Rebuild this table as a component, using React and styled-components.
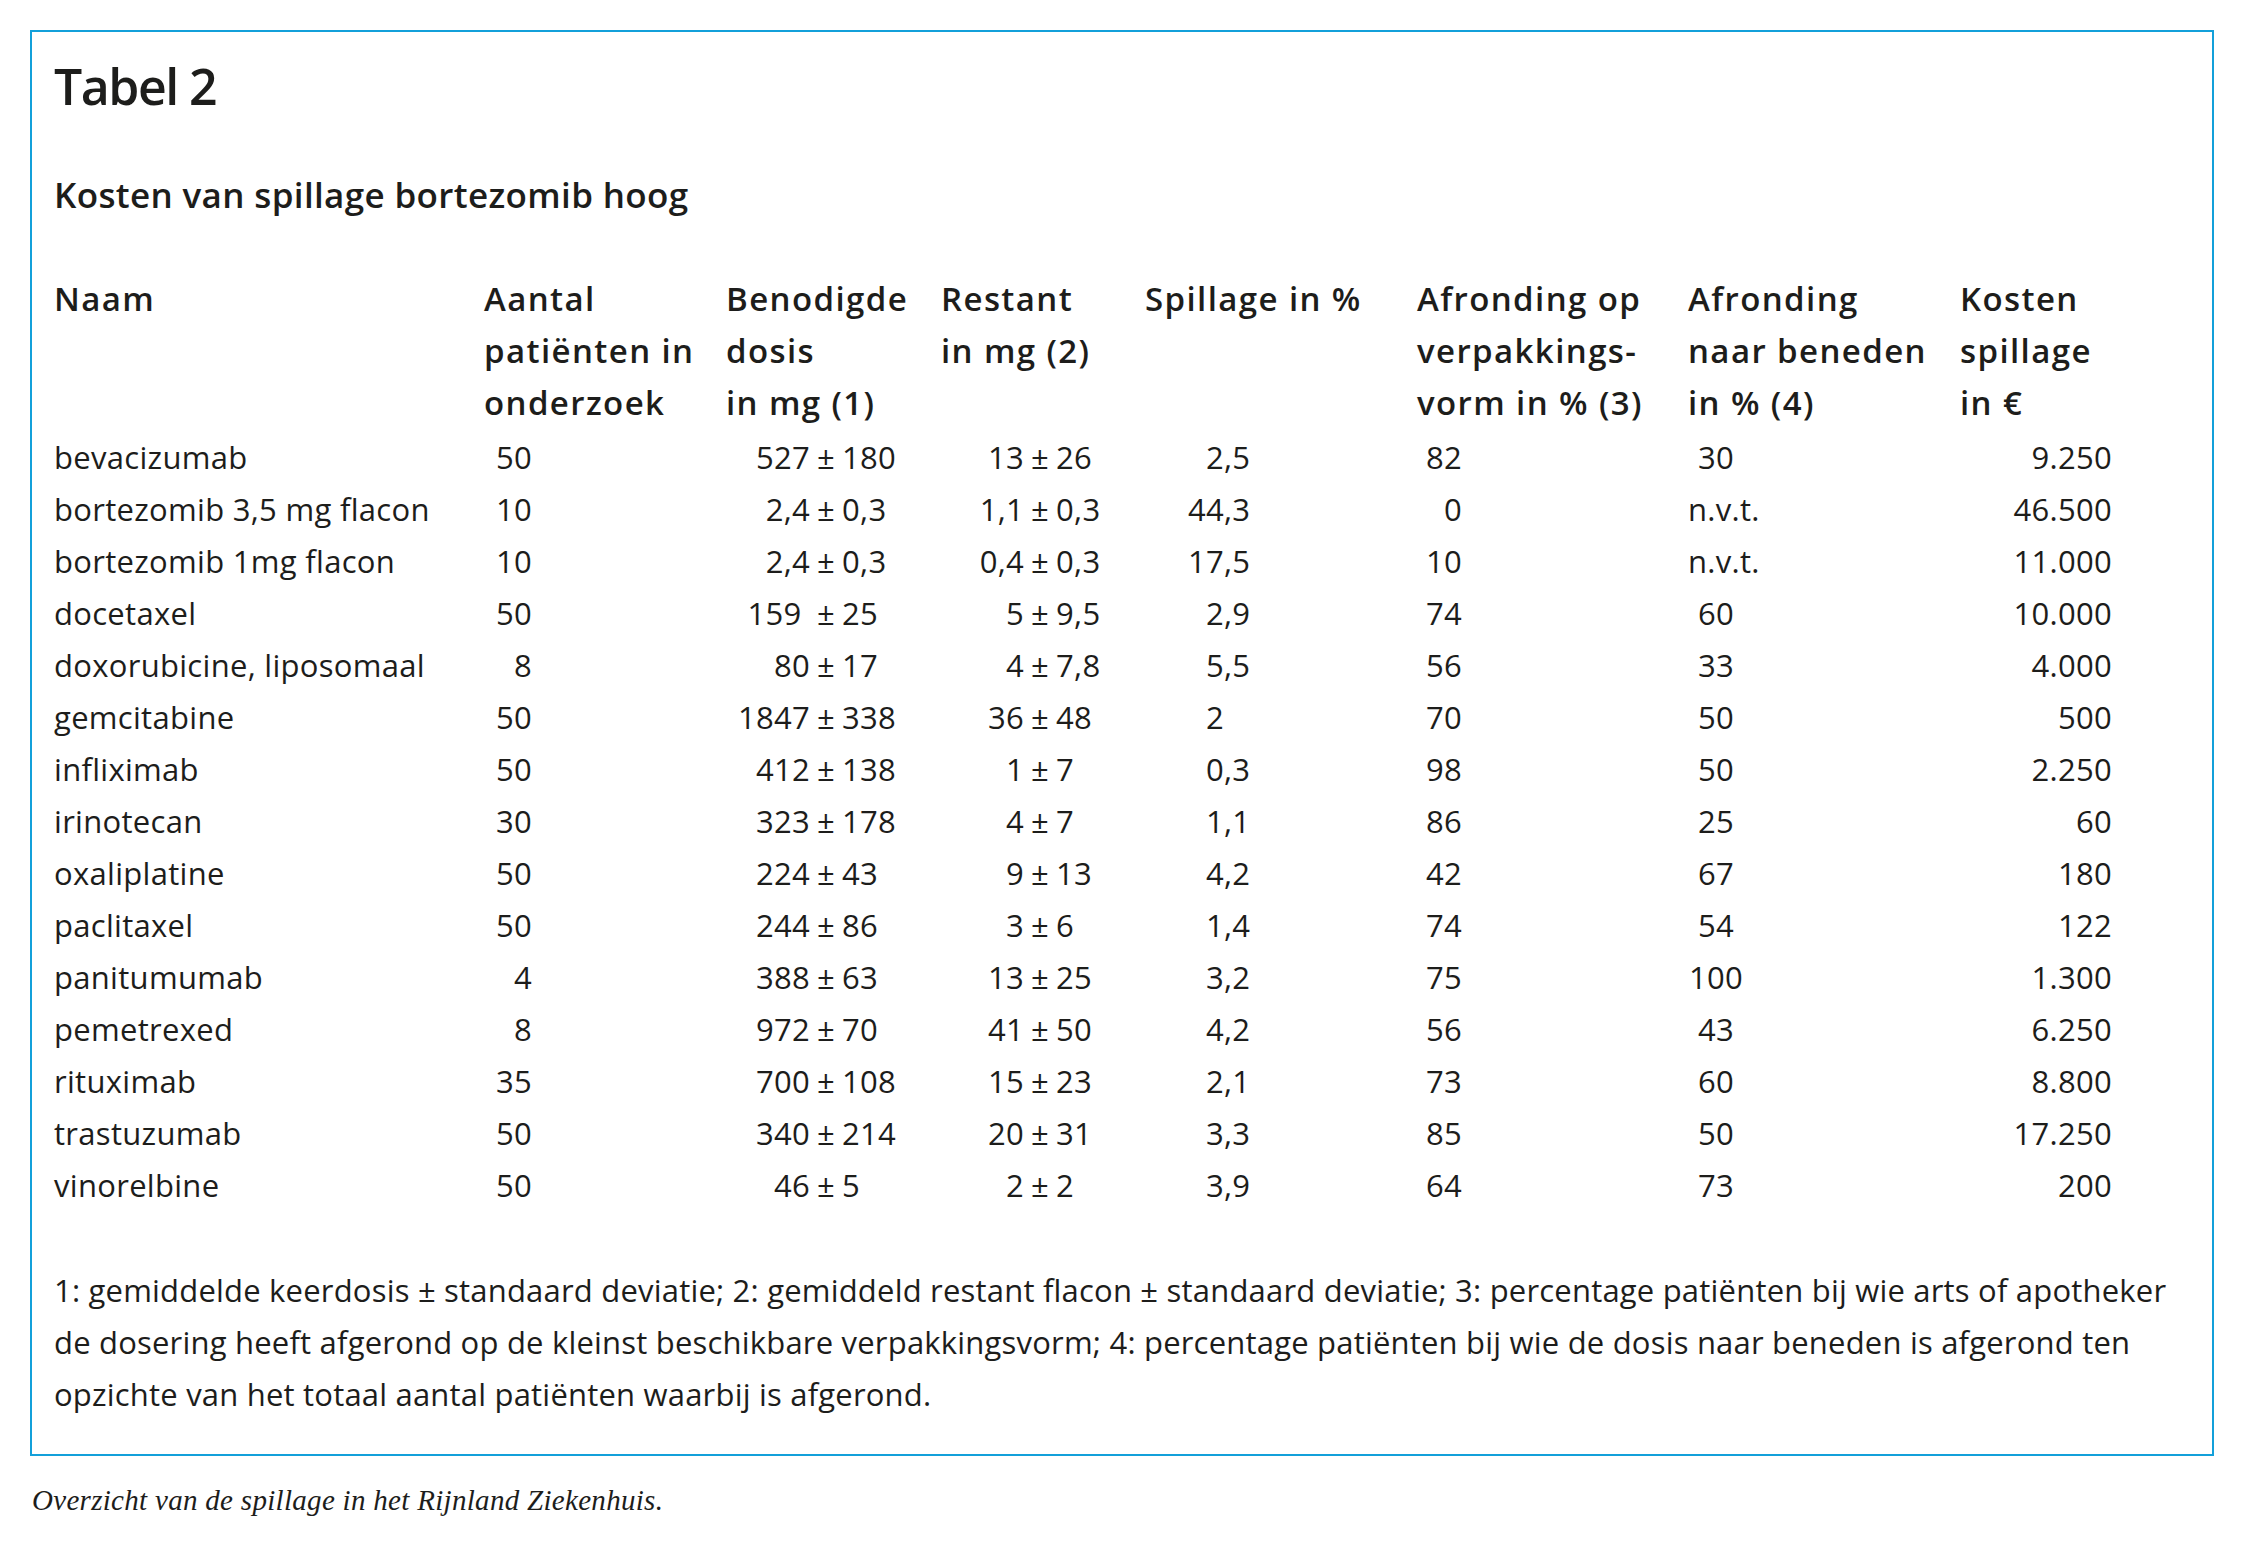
import React from 'react';
import styled, { createGlobalStyle } from 'styled-components';

const GlobalStyle = createGlobalStyle`
  html, body {
    margin: 0;
    padding: 0;
    background: #FFFFFF;
  }
  body {
    font-family: 'Open Sans', 'Noto Sans', sans-serif;
    color: #1D1D1B;
  }
`;

const COLUMNS = '430px 242px 215px 204px 272px 271px 272px 152px';

const rows = [
  ['bevacizumab', '50', ['527', '180'], ['13', '26'], '2,5', '82', '30', '9.250'],
  ['bortezomib 3,5 mg flacon', '10', ['2,4', '0,3'], ['1,1', '0,3'], '44,3', '0', 'n.v.t.', '46.500'],
  ['bortezomib 1mg flacon', '10', ['2,4', '0,3'], ['0,4', '0,3'], '17,5', '10', 'n.v.t.', '11.000'],
  ['docetaxel', '50', ['159 ', '25'], ['5', '9,5'], '2,9', '74', '60', '10.000'],
  ['doxorubicine, liposomaal', '8', ['80', '17'], ['4', '7,8'], '5,5', '56', '33', '4.000'],
  ['gemcitabine', '50', ['1847', '338'], ['36', '48'], '2', '70', '50', '500'],
  ['infliximab', '50', ['412', '138'], ['1', '7'], '0,3', '98', '50', '2.250'],
  ['irinotecan', '30', ['323', '178'], ['4', '7'], '1,1', '86', '25', '60'],
  ['oxaliplatine', '50', ['224', '43'], ['9', '13'], '4,2', '42', '67', '180'],
  ['paclitaxel', '50', ['244', '86'], ['3', '6'], '1,4', '74', '54', '122'],
  ['panitumumab', '4', ['388', '63'], ['13', '25'], '3,2', '75', '100', '1.300'],
  ['pemetrexed', '8', ['972', '70'], ['41', '50'], '4,2', '56', '43', '6.250'],
  ['rituximab', '35', ['700', '108'], ['15', '23'], '2,1', '73', '60', '8.800'],
  ['trastuzumab', '50', ['340', '214'], ['20', '31'], '3,3', '85', '50', '17.250'],
  ['vinorelbine', '50', ['46', '5'], ['2', '2'], '3,9', '64', '73', '200'],
];

const headers = [
  ['Naam'],
  ['Aantal', 'patiënten in', 'onderzoek'],
  ['Benodigde', 'dosis', 'in mg (1)'],
  ['Restant', 'in mg (2)'],
  ['Spillage in %'],
  ['Afronding op', 'verpakkings-', 'vorm in % (3)'],
  ['Afronding', 'naar beneden', 'in % (4)'],
  ['Kosten', 'spillage', 'in €'],
];

const footnotes = [
  '1: gemiddelde keerdosis ± standaard deviatie; 2: gemiddeld restant flacon ± standaard deviatie; 3: percentage patiënten bij wie arts of apotheker',
  'de dosering heeft afgerond op de kleinst beschikbare verpakkingsvorm; 4: percentage patiënten bij wie de dosis naar beneden is afgerond ten',
  'opzichte van het totaal aantal patiënten waarbij is afgerond.',
];

const Page = styled.div`
  padding: 30px 33px 0 30px;
`;

const Frame = styled.section`
  border: 2px solid #13A0DA;
  padding: 24px 22px 34px 22px;
`;

const Title = styled.h1`
  margin: 0;
  font-size: 50px;
  line-height: 60px;
  font-weight: 600;
  letter-spacing: -1.5px;
`;

const Subtitle = styled.h2`
  margin: 57px 0 0;
  font-size: 35px;
  line-height: 44px;
  font-weight: 600;
  letter-spacing: 0.35px;
`;

const Table = styled.div`
  margin-top: 56px;
  font-size: 31px;
  letter-spacing: 0.3px;
`;

const Row = styled.div`
  display: grid;
  grid-template-columns: ${COLUMNS};
  line-height: 52px;
  font-weight: ${(p) => (p.head ? 600 : 400)};
  font-size: ${(p) => (p.head ? '33px' : 'inherit')};
  letter-spacing: ${(p) => (p.head ? '1.4px' : 'inherit')};
  margin-bottom: ${(p) => (p.head ? '2px' : '0')};
  white-space: pre;
`;

const HeadCell = styled.div`
  display: flex;
  flex-direction: column;
`;

const Num = styled.span`
  display: inline-block;
  width: ${(p) => p.width}px;
  text-align: ${(p) => p.align || 'right'};
`;

const PlusMinus = styled.div`
  display: grid;
  grid-template-columns: ${(p) => p.lead}px auto auto;
  justify-content: start;

  span:first-child {
    text-align: right;
  }
  span:nth-child(2) {
    padding: 0 7px;
  }
`;

const Decimal = styled.div`
  display: grid;
  grid-template-columns: ${(p) => p.lead}px auto;
  justify-content: start;

  span:first-child {
    text-align: right;
  }
`;

const Footnotes = styled.div`
  margin-top: 53px;
  font-size: 31px;
  line-height: 52px;
  letter-spacing: 0.2px;
  white-space: nowrap;
`;

const Caption = styled.p`
  margin: 26px 0 0 2px;
  font-family: 'Liberation Serif', 'DejaVu Serif', serif;
  font-style: italic;
  font-size: 29px;
  line-height: 36px;
  letter-spacing: 0.3px;
  color: #1D1D1B;
`;

const Spread = ({ lead, value }) => (
  <PlusMinus lead={lead}>
    <span>{value[0]}</span>
    <span>±</span>
    <span>{value[1]}</span>
  </PlusMinus>
);

const DecimalValue = ({ lead, value }) => {
  const [whole, fraction] = value.split(',');
  return (
    <Decimal lead={lead}>
      <span>{whole}</span>
      <span>{fraction !== undefined ? `,${fraction}` : ''}</span>
    </Decimal>
  );
};

const App = () => (
  <Page>
    <GlobalStyle />
    <Frame>
      <Title>Tabel 2</Title>
      <Subtitle>Kosten van spillage bortezomib hoog</Subtitle>

      <Table>
        <Row head>
          {headers.map((lines) => (
            <HeadCell key={lines[0] + lines.length}>
              {lines.map((line) => <span key={line}>{line}</span>)}
            </HeadCell>
          ))}
        </Row>

        {rows.map(([name, count, dose, rest, waste, packRound, downRound, cost]) => (
          <Row key={name}>
            <div>{name}</div>
            <div><Num width={48}>{count}</Num></div>
            <Spread lead={84} value={dose} />
            <Spread lead={83} value={rest} />
            <DecimalValue lead={79} value={waste} />
            <div><Num width={45}>{packRound}</Num></div>
            <div>
              {downRound === 'n.v.t.' ? downRound : <Num width={56} align="center">{downRound}</Num>}
            </div>
            <div><Num width={152}>{cost}</Num></div>
          </Row>
        ))}
      </Table>

      <Footnotes>
        {footnotes.map((line) => <div key={line}>{line}</div>)}
      </Footnotes>
    </Frame>
    <Caption>Overzicht van de spillage in het Rijnland Ziekenhuis.</Caption>
  </Page>
);

export default App;
